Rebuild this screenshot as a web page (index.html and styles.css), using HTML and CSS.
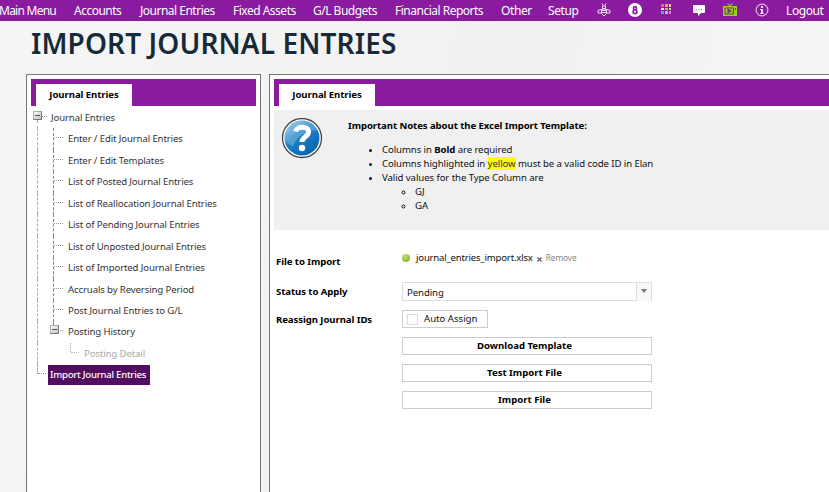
FILE: index.html
```html
<!DOCTYPE html>
<html lang="en">
<head>
<meta charset="utf-8">
<title>Import Journal Entries</title>
<link rel="stylesheet" href="styles.css">
</head>
<body>
<nav class="nav">
  <a class="main-menu">Main Menu</a><a>Accounts</a><a>Journal Entries</a><a>Fixed Assets</a><a>G/L Budgets</a><a>Financial Reports</a><a class="short">Other</a><a class="short">Setup</a>
  <svg width="14" height="14" viewBox="0 0 14 14" fill="none" stroke="#f3dff7" stroke-width="1"><path d="M5 .5 6.200 2.500M9 .5 7.800 2.500M5.500 3h3v2.500h-3zM6 6 1 7.500v2.500h3.500M8 6l5 1.500v2.500H9.500M4.500 7.500h5v3L7 13l-2.500-2.500zM4.500 9.500h5M7 5.500v2"/></svg>
  <svg width="14" height="14" viewBox="0 0 14 14" fill="none"><circle cx="7" cy="7" r="7" fill="#fff"/><g stroke="#8a1aa0" stroke-width="1.600"><circle cx="7" cy="5.200" r="1.600"/><circle cx="7" cy="8.700" r="1.900"/></g></svg>
  <svg width="11" height="14" viewBox="0 0 11 14"><path fill="#ef6a70" d="M0 1h3v3H0z"/><path fill="#f6a15b" d="M4 1h3v3H4z"/><path fill="#f5d45e" d="M8 1h2v3H8z"/><path fill="#e9e4dd" d="M0 5h3v2H0z"/><path fill="#7fd58a" d="M4 5h3v2H4z"/><path fill="#b8e07a" d="M8 5h2v2H8z"/><path fill="#5aa7c7" d="M0 8h3v3H0z"/><path fill="#d9a6e8" d="M4 8h3v3H4z"/><path fill="#e37fc5" d="M8 8h2v3H8z"/></svg>
  <svg width="14" height="14" viewBox="0 0 14 14"><path fill="#fff" d="M2 2h10q1 0 1 1v6q0 1-1 1H9l-3 3v-3H2q-1 0-1-1V3q0-1 1-1z"/><path fill="#8a1aa0" opacity=".7" d="M4 6h1v1H4zM6.500 6h1v1h-1zM9 6h1v1H9z"/></svg>
  <svg width="14" height="14" viewBox="0 0 14 14"><path d="M4.500 .5 7 3 9.500 .5" fill="none" stroke="#8fae4a" stroke-width="1.200"/><path fill="#9bcf1d" d="M0 3h14v10H0z"/><path fill="#9bcf1d" stroke="#71307c" stroke-width="1" d="M2 5h8.500v6H2z"/><path fill="#71307c" d="M4.500 5.500v5L9 8zM12 5h1v2h-1z"/></svg>
  <svg width="14" height="14" viewBox="0 0 14 14"><circle cx="7" cy="7" r="5.900" fill="none" stroke="#dcb4e4" stroke-width="1.200"/><path fill="#f3dff7" d="M6 3h2v2H6zM5 6h3v4h1v1H5v-1h1V7H5z"/></svg>
  <a class="short">Logout</a>
</nav>
<h1>IMPORT JOURNAL ENTRIES</h1>
<main>
  <section class="panel side">
    <div class="bar"><div class="tab">Journal Entries</div></div>
    <ul class="tree">
      <li class="root"><i class="box"></i><span>Journal Entries</span></li>
      <li class="leaf first"><span>Enter / Edit Journal Entries</span></li>
      <li class="leaf"><span>Enter / Edit Templates</span></li>
      <li class="leaf"><span>List of Posted Journal Entries</span></li>
      <li class="leaf"><span>List of Reallocation Journal Entries</span></li>
      <li class="leaf"><span>List of Pending Journal Entries</span></li>
      <li class="leaf"><span>List of Unposted Journal Entries</span></li>
      <li class="leaf"><span>List of Imported Journal Entries</span></li>
      <li class="leaf"><span>Accruals by Reversing Period</span></li>
      <li class="leaf"><span>Post Journal Entries to G/L</span></li>
      <li class="leaf open"><i class="box"></i><span>Posting History</span></li>
      <li class="detail"><span>Posting Detail</span></li>
      <li class="current"><span>Import Journal Entries</span></li>
    </ul>
  </section>
  <section class="panel content">
    <div class="bar"><div class="tab">Journal Entries</div></div>
    <div class="notes">
      <svg class="help" width="42" height="42" viewBox="0 0 42 42">
        <defs><linearGradient id="g" x1="0" y1="0" x2=".7" y2="1"><stop offset="0" stop-color="#8fc4e8"/><stop offset=".45" stop-color="#2385c8"/><stop offset="1" stop-color="#0064b0"/></linearGradient></defs>
        <circle cx="21" cy="20" r="19.500" fill="#fff" stroke="#444" stroke-width="1.300"/>
        <circle cx="21" cy="20" r="17.500" fill="url(#g)"/>
        <path d="M3.500 21a17.500 17.500 0 0 1 33-9C27 13 16 17 12 28Q7 27 3.500 21z" fill="#fff" opacity=".22"/>
        <path d="M14.500 13.500c1-5.500 13-6 13 .5 0 5-6.500 4.500-6.500 10" fill="none" stroke="#fff" stroke-width="5"/>
        <circle cx="21" cy="30" r="3.200" fill="#fff"/>
      </svg>
      <div class="text">
        <b class="lead">Important Notes about the Excel Import Template:</b>
        <ul>
          <li>Columns in <b>Bold</b> are required</li>
          <li>Columns highlighted in <mark>yellow</mark> must be a valid code ID in Elan</li>
          <li>Valid values for the Type Column are
            <ul><li>GJ</li><li>GA</li></ul>
          </li>
        </ul>
      </div>
    </div>
    <div class="form">
      <label class="file-label">File to Import</label>
      <div class="file"><i class="dot"></i><span class="name">journal_entries_import.xlsx</span><svg width="5" height="5" viewBox="0 0 5 5"><path d="M.5.5l4 4M4.500.5l-4 4" stroke="#666" stroke-width="1.400"/></svg><span class="remove">Remove</span></div>
      <label>Status to Apply</label>
      <div class="select"><span>Pending</span><i></i></div>
      <label>Reassign Journal IDs</label>
      <div class="check"><i></i><span>Auto Assign</span></div>
      <button>Download Template</button>
      <button>Test Import File</button>
      <button>Import File</button>
    </div>
  </section>
</main>
</body>
</html>
```
FILE: styles.css
```css
* { box-sizing: border-box; }
body {
  margin: 0;
  height: 492px;
  overflow: hidden;
  background: linear-gradient(100deg, #f5f5f5, #f1f1f1 60%, #f7f7f7);
  font: 9.6px/14px "Noto Sans", "Open Sans", sans-serif;
  letter-spacing: -0.08px;
  color: #111;
}
ul { list-style: none; margin: 0; padding: 0; }
.nav {
  height: 21px;
  margin-left: -1px;
  background: #8a1aa0;
  color: #fff;
  display: grid;
  grid-template-columns: 75px 66px 93px 80px 82px 106px 47px 49px 31px 33px 31px 31px 32px 31px auto;
  align-items: center;
  font-size: 12px;
  letter-spacing: -0.5px;
  white-space: nowrap;
}
.nav a { line-height: 19px; margin-bottom: 1px; }
.nav svg { margin-bottom: 1px; }
.nav .main-menu { letter-spacing: -0.75px; }
.nav .short { letter-spacing: -0.4px; }
h1 {
  margin: 0;
  height: 53px;
  padding: 3px 0 0 31px;
  font-size: 28px;
  line-height: 38px;
  font-weight: 600;
  letter-spacing: 0.1px;
  color: #172a3a;
  text-shadow: 0 1px 1px #fff;
  white-space: nowrap;
}
main { display: flex; gap: 8px; margin-left: 26px; height: 430px; }
.panel { border: 1px solid #777; background: #fff; padding: 4px; }
.side { width: 235px; flex: none; }
.content { flex: 1; border-right: 0; padding-right: 0; }
.bar { height: 27px; background: #8a1aa0; padding: 5px 0 0 5px; }
.tab {
  width: 96px;
  height: 22px;
  background: #fff;
  text-align: center;
  line-height: 22px;
  font-weight: 700;
  color: #000;
}
.tree { padding: 1px 0 0 6px; color: #333; letter-spacing: -0.12px; }
.tree li {
  position: relative;
  height: 21.45px;
  line-height: 21px;
  padding-left: 30px;
  border-left: 1px dashed #aaa;
  white-space: nowrap;
}
.tree .root { padding-left: 13px; border-left-color: transparent; }
.tree li::after {
  content: "";
  position: absolute;
  left: 16px;
  top: 9px;
  width: 9px;
  border-top: 1px dotted #999;
}
.tree .root::after { left: 4px; width: 5px; }
.tree .root::before { content: ""; position: absolute; left: -1px; top: 13px; height: 9px; border-left: 1px dashed #aaa; }
.tree .leaf::before {
  content: "";
  position: absolute;
  left: 15px;
  top: 0;
  height: 22px;
  border-left: 1px dashed #888;
}
.tree .open::before { height: 5px; }
.box {
  position: absolute;
  z-index: 1;
  left: -5px;
  top: 4px;
  width: 9px;
  height: 9px;
  border: 1px solid #aaa;
  border-right-color: #777;
  border-bottom-color: #777;
  background: linear-gradient(#555, #555) center / 5px 1px no-repeat, linear-gradient(135deg, #fff, #bbb);
}
.open .box { left: 12px; }
.tree .detail { padding-left: 46px; color: #aaa; }
.tree .detail::before { content: ""; position: absolute; left: 32px; top: 0; height: 9px; border-left: 1px dotted #aaa; }
.tree .detail::after { left: 33px; width: 8px; border-color: #bbb; }
.tree .current { border-left: 0; padding: 1px 0 0 11px; }
.tree .current::before { content: ""; position: absolute; left: 0; top: 0; height: 10px; border-left: 1px dashed #aaa; }
.tree .current::after { left: 1px; width: 8px; }
.current span {
  display: block;
  width: 102px;
  height: 20px;
  line-height: 20px;
  padding-left: 2px;
  background: #520d60;
  color: #fff;
  font-weight: 500;
  letter-spacing: -0.25px;
}
.notes {
  display: flex;
  height: 120px;
  margin-top: 4px;
  background: #f0f0f0;
  padding: 8px 0 0 7px;
}
.help { flex: none; }
.text { margin-left: 25px; white-space: nowrap; color: #111; }
.text b { font-weight: 700; color: #000; }
.text .lead { display: block; margin-bottom: 10px; line-height: 15px; }
.text > ul { list-style: disc; padding-left: 34px; }
.text ul ul { list-style: circle; padding-left: 33px; }
mark { background: #ff0; color: #333; }
.form {
  display: grid;
  grid-template-columns: 126px 250px;
  grid-template-rows: 43px 19px 18px 18px 18px 18px;
  row-gap: 9px;
  padding-left: 2px;
}
.form label { font-weight: 700; color: #000; line-height: 19px; }
.form .file-label { padding-top: 22px; }
.file { display: flex; align-items: center; height: 14px; margin-top: 21px; white-space: nowrap; }
.dot { width: 8px; height: 8px; border-radius: 50%; background: radial-gradient(circle at 40% 30%, #c4e06c, #78ab20); margin-right: 6px; }
.name { letter-spacing: -0.2px; margin-right: 1px; }
.file svg { margin: 2px 4px 0 3px; }
.remove { font-size: 8.300px; color: #888; }
.select { display: flex; border: 1px solid #ddd; height: 19px; }
.select span { flex: 1; padding: 0 4px; line-height: 19px; }
.select i { width: 15px; height: 18px; border-left: 1px solid #ddd; background: #f8f8f8; }
.select i::before { content: ""; display: block; margin: 6px 0 0 4px; width: 0; border: 3px solid transparent; border-top: 4px solid #777; border-bottom: 0; }
.check { display: flex; align-items: center; width: 86px; height: 18px; border: 1px solid #ccc; padding-left: 4px; letter-spacing: 0; }
.check i { width: 11px; height: 11px; border: 1px solid #ddd; margin-right: 6px; }
button {
  grid-column: 2;
  padding: 0 5px 0 0;
  border: 1px solid #ccc;
  background: #fff;
  font: 700 9.6px/16px "Noto Sans", "Open Sans", sans-serif;
  letter-spacing: 0;
  color: #000;
}
```
